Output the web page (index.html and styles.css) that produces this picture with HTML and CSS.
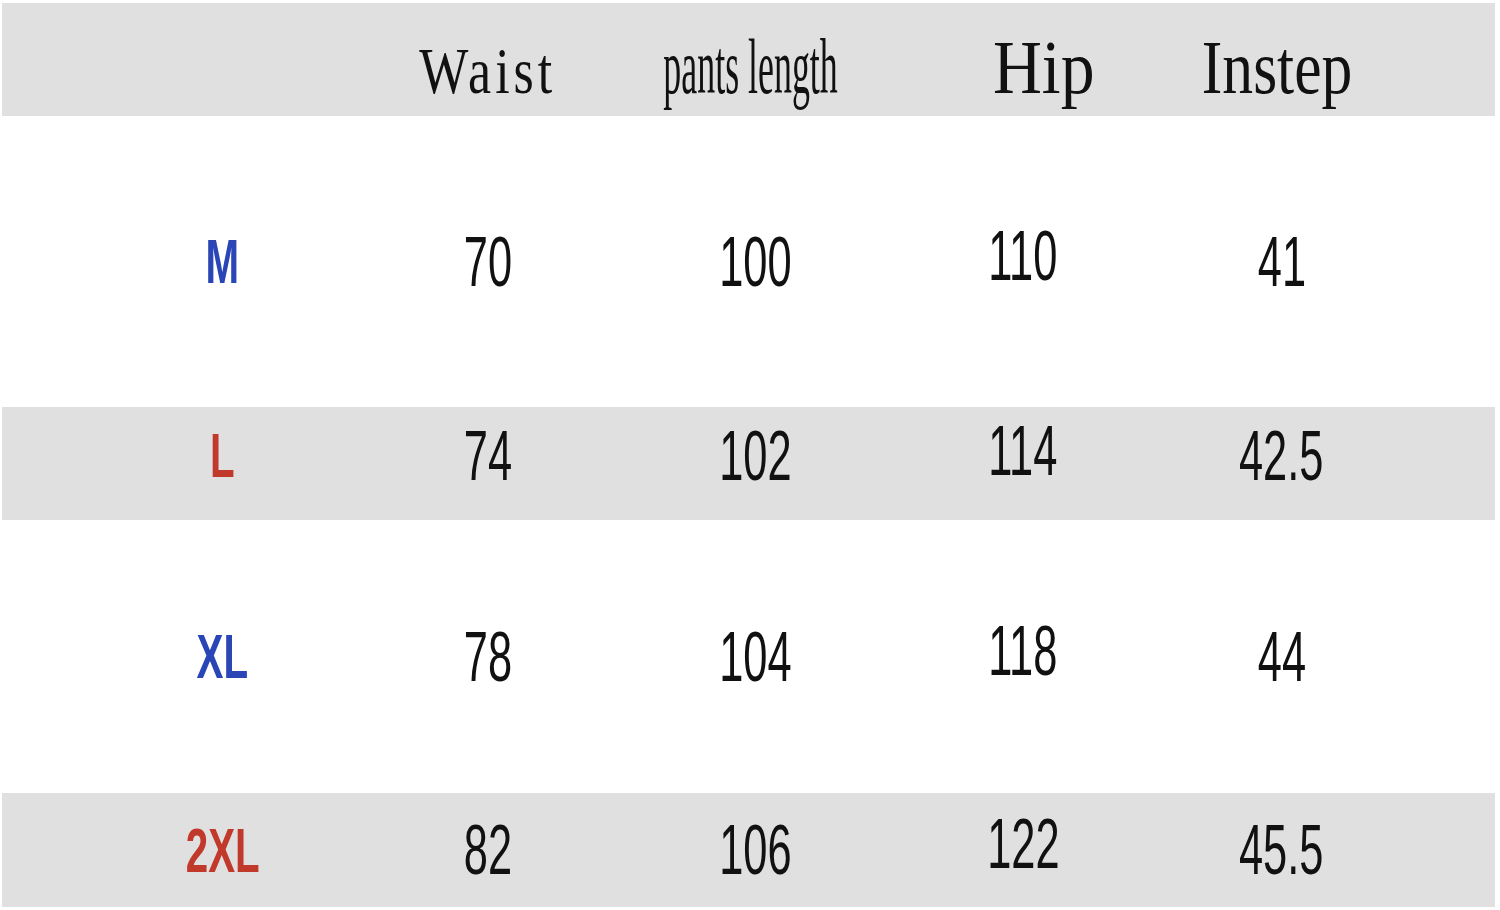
FILE: index.html
```html
<!DOCTYPE html>
<html>
<head>
<meta charset="utf-8">
<link rel="stylesheet" href="styles.css">
</head>
<body>
<div class="chart">
  <div class="row head">
    <div class="cell c1"></div>
    <div class="cell c2"><span class="h h-waist">Waist</span></div>
    <div class="cell c3 pants-head"><span class="h h-pants">pants length</span></div>
    <div class="cell c4 hip-head"><span class="h h-hip">Hip</span></div>
    <div class="cell c5 instep-head"><span class="h h-instep">Instep</span></div>
  </div>
  <div class="row white tall">
    <div class="cell c1"><span class="size blue">M</span></div>
    <div class="cell c2"><span class="num">70</span></div>
    <div class="cell c3"><span class="num">100</span></div>
    <div class="cell c4 hip"><span class="num">110</span></div>
    <div class="cell c5"><span class="num">41</span></div>
  </div>
  <div class="row gray short lifted">
    <div class="cell c1"><span class="size red">L</span></div>
    <div class="cell c2"><span class="num">74</span></div>
    <div class="cell c3"><span class="num">102</span></div>
    <div class="cell c4 hip"><span class="num">114</span></div>
    <div class="cell c5"><span class="num">42.5</span></div>
  </div>
  <div class="row white mid">
    <div class="cell c1"><span class="size blue">XL</span></div>
    <div class="cell c2"><span class="num">78</span></div>
    <div class="cell c3"><span class="num">104</span></div>
    <div class="cell c4 hip"><span class="num">118</span></div>
    <div class="cell c5"><span class="num">44</span></div>
  </div>
  <div class="row gray short last">
    <div class="cell c1"><span class="size red">2XL</span></div>
    <div class="cell c2"><span class="num">82</span></div>
    <div class="cell c3"><span class="num">106</span></div>
    <div class="cell c4 hip"><span class="num">122</span></div>
    <div class="cell c5"><span class="num">45.5</span></div>
  </div>
</div>
</body>
</html>
```

FILE: styles.css
```css
html, body {
  margin: 0;
  padding: 0;
  background: #ffffff;
}

body {
  width: 1500px;
  height: 910px;
  overflow: hidden;
}

.chart {
  margin: 3px 5px 0 2px;
  display: flex;
  flex-direction: column;
}

.row {
  display: grid;
  grid-template-columns: 353px 265px 271px 264px 340px;
}

.head {
  height: 113px;
  background: #e0e0e0;
  align-items: baseline;
  box-sizing: border-box;
}

.gray {
  background: #e0e0e0;
}

.white {
  background: #ffffff;
}

.tall { height: 291px; }
.mid { height: 273px; }
.short { height: 113px; }
.last { height: 114px; }

.cell {
  display: flex;
  align-items: center;
  justify-content: center;
  height: 100%;
  box-sizing: border-box;
}

.head .cell {
  align-items: baseline;
  padding-top: 25px;
}

.c1 { padding-left: 88px; }
.c5 { padding-right: 87px; }
.pants-head { padding-right: 10px; }
.hip-head { padding-left: 42px; }
.head .instep-head { padding-right: 96px; }
.hip { padding-bottom: 12px; }
.lifted .cell { padding-bottom: 16px; }
.lifted .hip { padding-bottom: 26px; }

.h {
  display: inline-block;
  font-family: "Liberation Serif", "Times New Roman", serif;
  color: #111;
  line-height: 1;
  white-space: nowrap;
}

.h-waist {
  font-size: 65px;
  letter-spacing: 5px;
  transform: scaleX(0.8);
}

.h-pants {
  font-size: 78px;
  transform: scaleX(0.46);
}

.h-hip {
  font-size: 77px;
  transform: scaleX(0.88);
}

.h-instep {
  font-size: 77px;
  transform: scaleX(0.8);
}

.num {
  display: inline-block;
  font-family: "Liberation Sans", Arial, sans-serif;
  font-size: 70px;
  line-height: 1;
  color: #111;
  transform: scaleX(0.62);
  white-space: nowrap;
}

.size {
  display: inline-block;
  font-family: "Liberation Sans", Arial, sans-serif;
  font-weight: bold;
  font-size: 63px;
  line-height: 1;
  transform: scaleX(0.64);
  white-space: nowrap;
}

.blue { color: #2a45b6; }
.red { color: #c0392b; }
```
